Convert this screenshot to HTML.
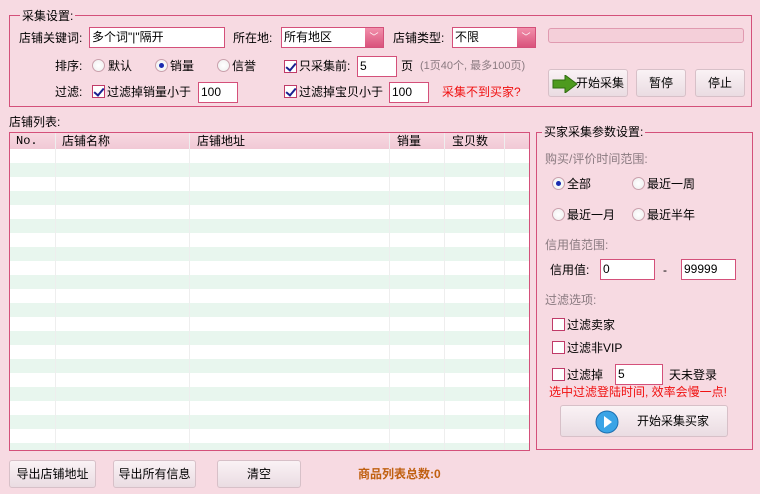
<!DOCTYPE html>
<html><head><meta charset="utf-8"><style>
*{box-sizing:border-box;margin:0;padding:0}
body{width:760px;height:494px;background:#f7dae2;font:12px "Liberation Sans","Noto Sans CJK SC",sans-serif;color:#000;position:relative;overflow:hidden}
.a{position:absolute;white-space:nowrap;line-height:14px}
.fs{position:absolute;border:1px solid #d4507a}
.leg{position:absolute;background:#f7dae2;padding:0 2px;line-height:14px}
.in{position:absolute;background:#fff;border:1px solid #d4507a;height:21px;line-height:19px;padding-left:2px}
.dd{position:absolute;width:18px;height:19px;top:0;right:0;background:linear-gradient(#f28fab,#d9537c);color:#fff;font-size:9px;text-align:center;line-height:18px}
.rb{position:absolute;width:13px;height:13px;border-radius:50%;border:1px solid #c9a0ac;background:radial-gradient(#fff,#eee)}
.rb.on::after{content:"";position:absolute;left:3px;top:3px;width:5px;height:5px;border-radius:50%;background:#1a2cb0}
.cb{position:absolute;width:13px;height:13px;border:1px solid #c03a68;background:#fff}
.cb.on::after{content:"";position:absolute;left:3px;top:0px;width:4px;height:8px;border:solid #1a2090;border-width:0 2px 2px 0;transform:rotate(40deg)}
.btn{position:absolute;border:1px solid #d7c0c8;border-radius:3px;background:linear-gradient(#faf2f5,#eadce2);text-align:center;white-space:nowrap}
.g{color:#8a7a80}
</style></head><body>
<div class="fs" style="left:9px;top:15px;width:743px;height:92px"></div>
<div class="leg" style="left:20px;top:9px">采集设置:</div>
<div class="a" style="left:19px;top:31px">店铺关键词:</div>
<div class="in" style="left:89px;top:27px;width:136px">多个词"|"隔开</div>
<div class="a" style="left:233px;top:31px">所在地:</div>
<div class="in" style="left:281px;top:27px;width:103px">所有地区<div class="dd">﹀</div></div>
<div class="a" style="left:393px;top:31px">店铺类型:</div>
<div class="in" style="left:452px;top:27px;width:84px">不限<div class="dd">﹀</div></div>
<div style="position:absolute;left:548px;top:28px;width:196px;height:15px;border:1px solid #e09ab0;border-radius:3px;background:#f4cfd9"></div>
<div class="a" style="left:55px;top:59px">排序:</div>
<div class="rb" style="left:92px;top:59px"></div><div class="a" style="left:108px;top:59px">默认</div>
<div class="rb on" style="left:155px;top:59px"></div><div class="a" style="left:170px;top:59px">销量</div>
<div class="rb" style="left:217px;top:59px"></div><div class="a" style="left:232px;top:59px">信誉</div>
<div class="cb on" style="left:284px;top:60px"></div><div class="a" style="left:299px;top:59px">只采集前:</div>
<div class="in" style="left:357px;top:56px;width:40px">5</div>
<div class="a" style="left:401px;top:59px">页</div>
<div class="a g" style="left:420px;top:59px;font-size:11px">(1页40个, 最多100页)</div>
<div class="a" style="left:55px;top:85px">过滤:</div>
<div class="cb on" style="left:92px;top:85px"></div><div class="a" style="left:107px;top:85px">过滤掉销量小于</div>
<div class="in" style="left:198px;top:82px;width:40px">100</div>
<div class="cb on" style="left:284px;top:85px"></div><div class="a" style="left:299px;top:85px">过滤掉宝贝小于</div>
<div class="in" style="left:389px;top:82px;width:40px">100</div>
<div class="a" style="left:442px;top:85px;color:#f01010">采集不到买家?</div>
<div class="btn" style="left:548px;top:69px;width:80px;height:28px;line-height:26px;text-align:left;padding-left:27px">开始采集
<svg style="position:absolute;left:3px;top:5px" width="26" height="18"><path d="M1 5h12V0l12 9-12 9v-5H1z" fill="#4d9a1e" stroke="#2f6d10"/></svg></div>
<div class="btn" style="left:636px;top:69px;width:50px;height:28px;line-height:26px">暂停</div>
<div class="btn" style="left:695px;top:69px;width:50px;height:28px;line-height:26px">停止</div>

<div class="a" style="left:9px;top:115px">店铺列表:</div>
<div style="position:absolute;left:9px;top:132px;width:521px;height:319px;border:1px solid #d4507a;overflow:hidden;background:repeating-linear-gradient(#fff 0 14px,#e8f6ee 14px 28px);background-position:0 16px">
<div style="position:absolute;left:0;top:0;width:100%;height:16px;background:linear-gradient(#f7d9e1,#f1c9d5)"></div>
<div class="a" style="left:6px;top:1px;font-family:'Liberation Mono',monospace">No.</div>
<div class="a" style="left:52px;top:1px">店铺名称</div>
<div class="a" style="left:187px;top:1px">店铺地址</div>
<div class="a" style="left:387px;top:1px">销量</div>
<div class="a" style="left:442px;top:1px">宝贝数</div>
<div style="position:absolute;left:45px;top:0;width:1px;height:100%;background:#eee"></div>
<div style="position:absolute;left:179px;top:0;width:1px;height:100%;background:#eee"></div>
<div style="position:absolute;left:379px;top:0;width:1px;height:100%;background:#eee"></div>
<div style="position:absolute;left:434px;top:0;width:1px;height:100%;background:#eee"></div>
<div style="position:absolute;left:494px;top:0;width:1px;height:100%;background:#eee"></div>
</div>

<div class="fs" style="left:536px;top:132px;width:217px;height:318px"></div>
<div class="leg" style="left:542px;top:125px">买家采集参数设置:</div>
<div class="a g" style="left:545px;top:152px">购买/评价时间范围:</div>
<div class="rb on" style="left:552px;top:177px"></div><div class="a" style="left:567px;top:177px">全部</div>
<div class="rb" style="left:632px;top:177px"></div><div class="a" style="left:647px;top:177px">最近一周</div>
<div class="rb" style="left:552px;top:208px"></div><div class="a" style="left:567px;top:208px">最近一月</div>
<div class="rb" style="left:632px;top:208px"></div><div class="a" style="left:647px;top:208px">最近半年</div>
<div class="a g" style="left:545px;top:238px">信用值范围:</div>
<div class="a" style="left:550px;top:263px">信用值:</div>
<div class="in" style="left:600px;top:259px;width:55px">0</div>
<div class="a" style="left:663px;top:263px">-</div>
<div class="in" style="left:681px;top:259px;width:55px">99999</div>
<div class="a g" style="left:545px;top:293px">过滤选项:</div>
<div class="cb" style="left:552px;top:318px"></div><div class="a" style="left:567px;top:318px">过滤卖家</div>
<div class="cb" style="left:552px;top:341px"></div><div class="a" style="left:567px;top:341px">过滤非VIP</div>
<div class="cb" style="left:552px;top:368px"></div><div class="a" style="left:567px;top:368px">过滤掉</div>
<div class="in" style="left:615px;top:364px;width:48px">5</div>
<div class="a" style="left:669px;top:368px">天未登录</div>
<div class="a" style="left:549px;top:385px;color:#f01010">选中过滤登陆时间, 效率会慢一点!</div>
<div class="btn" style="left:560px;top:405px;width:168px;height:32px;line-height:30px;text-align:left;padding-left:76px">开始采集买家
<svg style="position:absolute;left:34px;top:4px" width="24" height="24"><circle cx="12" cy="12" r="11" fill="#3aa4e6" stroke="#1c6fb0"/><path d="M9 6l8 6-8 6z" fill="#fff"/></svg></div>

<div class="btn" style="left:9px;top:460px;width:87px;height:28px;line-height:26px">导出店铺地址</div>
<div class="btn" style="left:113px;top:460px;width:83px;height:28px;line-height:26px">导出所有信息</div>
<div class="btn" style="left:217px;top:460px;width:84px;height:28px;line-height:26px">清空</div>
<div class="a" style="left:358px;top:467px;color:#c06010;font-weight:bold">商品列表总数:0</div>
</body></html>
